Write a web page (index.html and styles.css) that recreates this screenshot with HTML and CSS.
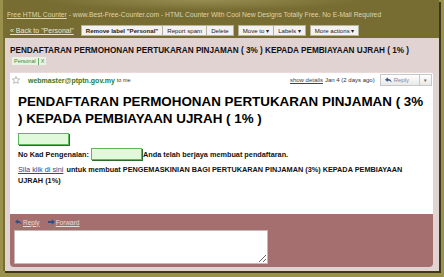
FILE: index.html
```html
<!DOCTYPE html>
<html lang="ms">
<head>
  <meta charset="UTF-8">
  <title>PENDAFTARAN PERMOHONAN PERTUKARAN PINJAMAN</title>
  <link rel="stylesheet" href="styles.css">
</head>
<body>
  <div class="shot">
    <!-- iklan atas -->
    <div class="promo">
      <a href="#">Free HTML Counter</a> - www.Best-Free-Counter.com - HTML Counter With Cool New Designs Totally Free. No E-Mail Required
    </div>

    <!-- toolbar -->
    <div class="toolbar">
      <a class="back" href="#">&laquo; Back to "Personal"</a>
      <div class="btn-group">
        <button class="btn strong">Remove label "Personal"</button>
        <button class="btn">Report spam</button>
        <button class="btn">Delete</button>
      </div>
      <div class="btn-group">
        <button class="btn">Move to &#9662;</button>
        <button class="btn">Labels &#9662;</button>
      </div>
      <div class="btn-group">
        <button class="btn">More actions &#9662;</button>
      </div>
    </div>

    <div class="panel">
      <div class="subject">PENDAFTARAN PERMOHONAN PERTUKARAN PINJAMAN ( 3% ) KEPADA PEMBIAYAAN UJRAH ( 1% )</div>
      <div class="labels"><span class="label">Personal<span class="sep"></span>X</span></div>

      <div class="message">
        <div class="msg-head">
          <svg class="star" width="8" height="8" viewBox="0 0 10 10">
            <path d="M5 0.6 L6.3 3.6 L9.6 3.8 L7.1 6 L7.9 9.3 L5 7.6 L2.1 9.3 L2.9 6 L0.4 3.8 L3.7 3.6 Z" fill="none" stroke="#a0a0a0" stroke-width="0.9"/>
          </svg>
          <span class="sender">webmaster@ptptn.gov.my</span>
          <span class="to">to me</span>
          <span class="spacer"></span>
          <a class="details" href="#">show details</a>
          <span class="date">Jan 4 (2 days ago)</span>
          <div class="reply-btn">
            <span class="reply-main">
              <svg width="7" height="6" viewBox="0 0 10 8"><path d="M4 0 L0 3.5 L4 7 L4 5 C6 5 8 5.5 9.5 7.5 C9 4.5 7 2.3 4 2.2 Z" fill="#3b5a8c"/></svg>
              Reply
            </span>
            <span class="reply-more">&#9662;</span>
          </div>
        </div>

        <div class="msg-body">
          <h1>PENDAFTARAN PERMOHONAN PERTUKARAN PINJAMAN ( 3% ) KEPADA PEMBIAYAAN UJRAH ( 1% )</h1>
          <div class="field first"></div>
          <p class="line">No Kad Pengenalan: <span class="field inline"></span>Anda telah berjaya membuat pendaftaran.</p>
          <p class="line link-line"><a href="#">Sila klik di sini</a><span>untuk membuat PENGEMASKINIAN BAGI PERTUKARAN PINJAMAN (3%) KEPADA PEMBIAYAAN</span> <span>UJRAH (1%)</span></p>
        </div>

        <div class="reply-area">
          <div class="reply-links">
            <a href="#"><svg width="7" height="6" viewBox="0 0 10 8"><path d="M4 0 L0 3.5 L4 7 L4 5 C6 5 8 5.5 9.5 7.5 C9 4.5 7 2.3 4 2.2 Z" fill="#2c4f8a"/></svg><span>Reply</span></a>
            <a href="#"><svg width="7" height="6" viewBox="0 0 10 8"><path d="M0 2.6 H5.5 V0 L10 4 L5.5 8 V5.4 H0 Z" fill="#2c4f8a"/></svg><span>Forward</span></a>
          </div>
          <textarea class="reply-box"></textarea>
        </div>
      </div>
    </div>
  </div>
</body>
</html>
```

FILE: styles.css
```css
/* dasar */
body {
  margin: 0;
  background: #9a914c;
  font-family: "Liberation Sans", Arial, sans-serif;
  color: #222;
  width: 444px;
  height: 277px;
  overflow: hidden;
}
.shot {
  margin-left: 3px;
  width: 436px;
  height: 271px;
  background: radial-gradient(ellipse 160px 10px at 200px 0px, #978d52, #776c31) no-repeat, #776c31;
  box-shadow: 2px 2px 0 #3d3819;
  overflow: hidden;
}
a {
  color: inherit;
}

/* iklan atas */
.promo {
  padding: 11px 0 0 4px;
  height: 13px;
  font-size: 6.75px;
  color: #dcd5b0;
  white-space: nowrap;
}

/* toolbar */
.toolbar {
  display: flex;
  align-items: center;
  gap: 4px;
  padding-left: 7px;
  height: 13px;
}
.back {
  font-size: 7px;
  color: #ece6c6;
  margin-right: 3px;
}
.btn-group {
  display: flex;
}
.btn {
  font-family: inherit;
  font-size: 6.1px;
  color: #222;
  background: #f4f2f0;
  border: 1px solid #b8b2a0;
  border-left: none;
  height: 11px;
  padding: 0 4px;
  line-height: 9px;
  margin: 0;
}
.btn-group .btn:first-child {
  border-left: 1px solid #b8b2a0;
}
.btn.strong {
  font-weight: bold;
}

/* panel */
.panel {
  margin: 1px 0 0 2px;
  width: 434px;
  height: 233px;
  background: #e2d3d3;
  padding: 8px 6px 0 5px;
  box-sizing: border-box;
}
.subject {
  font-size: 8.2px;
  font-weight: bold;
  color: #111;
  white-space: nowrap;
  line-height: 9px;
}
.labels {
  display: flex;
  margin-top: 2px;
  height: 9px;
  padding-left: 2px;
}
.label {
  display: flex;
  align-items: center;
  font-size: 5.5px;
  color: #3d8a3d;
  background: #e9f3e3;
  padding: 0 2px;
  height: 8px;
}
.sep {
  width: 1px;
  height: 7px;
  background: #6aa86a;
  margin: 0 2px;
}

/* pesanan */
.message {
  margin-top: 6px;
  background: #fff;
  border-top: 1px solid #eadada;
  border-radius: 0 2px 5px 5px;
}
.msg-head {
  display: flex;
  align-items: center;
  height: 12px;
  padding: 1px 1px 0 2px;
  font-size: 6px;
}
.star {
  margin-right: 8px;
}
.sender {
  color: #2f7a2f;
  font-weight: bold;
  font-size: 7px;
  margin-right: 2px;
}
.to {
  color: #333;
  font-size: 5.5px;
}
.spacer {
  flex: 1;
}
.details {
  color: #444;
  margin-right: 2px;
}
.date {
  color: #333;
  margin-right: 5px;
}
.reply-btn {
  display: flex;
  height: 10px;
  border: 1px solid #c8c8c8;
  background: linear-gradient(#ffffff, #e8e8e8);
  color: #7a8aa8;
}
.reply-main {
  display: flex;
  align-items: center;
  gap: 2px;
  padding: 0 10px 0 4px;
  border-right: 1px solid #c8c8c8;
}
.reply-more {
  padding: 0 4px;
  line-height: 10px;
  font-size: 5px;
  color: #555;
}

.msg-body {
  padding: 7px 7px 0 8px;
  height: 128px;
  box-sizing: border-box;
}
.msg-body h1 {
  font-size: 13.4px;
  line-height: 17px;
  margin: 0 0 6px 0;
  color: #000;
}
.field {
  background: #e2f8da;
  border: 1px solid #5cba5c;
  box-shadow: 1px 1px 0 #2e6a2e;
  width: 49px;
  height: 10px;
}
.field.first {
  margin-bottom: 5px;
}
.field.inline {
  display: inline-block;
  vertical-align: middle;
  margin: -2px 1px 0 0;
}
.line {
  font-size: 7.3px;
  font-weight: bold;
  margin: 0;
  line-height: 10px;
  color: #111;
}
.link-line {
  margin-top: 4px;
  line-height: 11px;
  padding-right: 19px;
}
.link-line a {
  color: #2b4a8c;
  font-weight: normal;
  margin-right: 3px;
}

/* kawasan balas */
.reply-area {
  background: #a56f6f;
  padding: 3px 4px 3px 4px;
  border-radius: 0 0 4px 4px;
}
.reply-links {
  display: flex;
  gap: 8px;
  font-size: 6.5px;
  height: 10px;
  align-items: center;
  padding-left: 1px;
}
.reply-links a {
  display: flex;
  align-items: center;
  gap: 1px;
  color: #e6dcdc;
}
.reply-box {
  display: block;
  margin-top: 3px;
  width: 254px;
  height: 34px;
  box-sizing: border-box;
  border: 1px solid #c8b8b8;
  background: #fff;
  resize: both;
}
```
